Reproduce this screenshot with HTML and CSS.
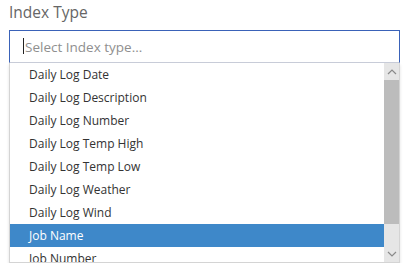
FILE: index.html
```html
<!DOCTYPE html>
<html lang="en">
<head>
    <meta charset="UTF-8">
    <title>Index Type</title>
    <link rel="stylesheet" href="styles.css">
</head>
<body>
    <div class="field">
        <label class="field-label" for="indexType">Index Type</label>
        <div class="select-box">
            <span class="caret"></span>
            <input type="text" id="indexType" class="select-input" placeholder="Select Index type...">
        </div>
        <div class="dropdown">
            <ul class="options">
                <li>Daily Log Date</li>
                <li>Daily Log Description</li>
                <li>Daily Log Number</li>
                <li>Daily Log Temp High</li>
                <li>Daily Log Temp Low</li>
                <li>Daily Log Weather</li>
                <li>Daily Log Wind</li>
                <li class="active">Job Name</li>
                <li>Job Number</li>
            </ul>
            <div class="scrollbar">
                <div class="scroll-btn">
                    <svg width="10" height="6" viewBox="0 0 10 6"><polyline points="1,5 5,1 9,5" fill="none" stroke="#8a8a8a" stroke-width="1.2"/></svg>
                </div>
                <div class="scroll-thumb"></div>
                <div class="scroll-track"></div>
                <div class="scroll-btn">
                    <svg width="10" height="6" viewBox="0 0 10 6"><polyline points="1,1 5,5 9,1" fill="none" stroke="#8a8a8a" stroke-width="1.2"/></svg>
                </div>
            </div>
        </div>
    </div>
</body>
</html>
```

FILE: styles.css
```css
body {
    margin: 0;
    padding: 0;
    background: #ffffff;
    font-family: "Open Sans", Arial, sans-serif;
}
.field {
    padding: 1px 6px 0 9px;
}
.field-label {
    display: block;
    font-size: 15.5px;
    line-height: 22px;
    color: #666;
    margin-bottom: 7px;
}
.select-box {
    position: relative;
    border: 1px solid #3a62b8;
    border-bottom-color: #c8ccd8;
    height: 31px;
}
.caret {
    position: absolute;
    left: 13px;
    top: 7px;
    width: 1px;
    height: 16px;
    background: #222;
}
.select-input {
    width: 100%;
    height: 31px;
    box-sizing: border-box;
    border: none;
    outline: none;
    padding: 0 0 0 15px;
    font-family: "Open Sans", Arial, sans-serif;
    font-size: 13.5px;
    color: #333;
    background: transparent;
}
.select-input::placeholder {
    color: #8f8f8f;
}
.dropdown {
    display: flex;
    height: 199px;
    border-left: 1px solid #d4d4d4;
    border-right: 1px solid #d4d4d4;
    border-bottom: 1px solid #d4d4d4;
    box-shadow: 0 2px 3px rgba(0, 0, 0, 0.12);
    overflow: hidden;
}
.options {
    flex: 1;
    list-style: none;
    margin: 0;
    padding: 0;
}
.options li {
    height: 23px;
    line-height: 23px;
    padding-left: 19px;
    font-size: 12px;
    color: #333;
}
.options li.active {
    background: #3e88c9;
    color: #fff;
}
.scrollbar {
    width: 15px;
    display: flex;
    flex-direction: column;
    background: #e6e6e6;
}
.scroll-btn {
    height: 17px;
    display: flex;
    align-items: center;
    justify-content: center;
}
.scroll-thumb {
    height: 144px;
    background: #bcbcbc;
}
.scroll-track {
    flex: 1;
}
```
